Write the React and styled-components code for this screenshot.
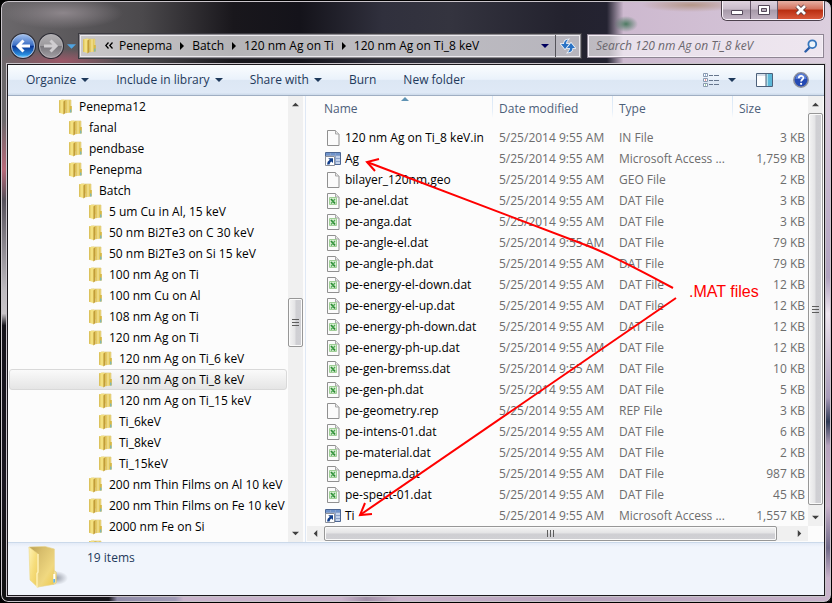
import React from "react";
import styled, { createGlobalStyle } from "styled-components";

const GlobalStyle = createGlobalStyle`
  * {
    box-sizing: border-box;
  }
  body {
    margin: 0;
    background: #000;
    font-family: "Open Sans", "Noto Sans", sans-serif;
    font-size: 12px;
    line-height: 16px;
    color: #000;
  }
  button {
    padding: 0;
    border: 0;
    background: none;
    font: inherit;
    color: inherit;
    white-space: nowrap;
  }
  svg {
    display: block;
    flex: none;
  }
`;

const Window = styled.div`
  display: flex;
  flex-direction: column;
  height: 100vh;
  overflow: hidden;
  border: 1px solid #000;
  border-radius: 8px;
  box-shadow: inset 0 0 0 1px #c9c4ca;
  background:
    linear-gradient(#d0777f00 20%, #b96a7a 28%, #55505a 33%, #bdbabf 48%, #c8c4c8 52%, #15131a 54%, #1a1720 80%, #111 100%)
      left / 7px 100% no-repeat,
    linear-gradient(#0000 10%, #d6c6da 20%, #b0a2bf 46%, #efe6ef 52%, #a79ab8 66%, #2f3a55 70%, #b6a3bd 74%, #c9b3cb 84%, #6f6988 91%, #c9b3cb 96%)
      right / 7px 100% no-repeat,
    linear-gradient(90deg, #15131a 13%, #8f8ba8 14%, #a09ab5 21%, #c9b3cb 22%, #c9b3cb 41%, #a08ea6 44%, #c9b3cb 48%, #b5a1bb 70%, #c9b3cb)
      bottom / 100% 7px no-repeat,
    radial-gradient(ellipse 62px 12px at 60px 60px, #9c5767 0%, #9c576700 100%),
    radial-gradient(ellipse 60px 16px at 62px 12px, #8d868b 0%, #8d868b00 100%),
    radial-gradient(ellipse 12px 8px at 625px 23px, #4d7a62 0%, #4d7a6200 100%),
    radial-gradient(ellipse 50px 7px at 690px 4px, #b59788 0%, #b5978800 100%),
    linear-gradient(90deg, #6b686b 0, #4b494c 17%, #19171c 28%, #14131a 36%, #30303d 46%, #34343f 54%, #23222e 68%, #242331 73%, #cdb9cf 75%, #d2c1d5 88%, #dccfde 100%);
`;

const TitleBar = styled.header`
  display: flex;
  flex-direction: column;
  justify-content: space-between;
  flex: none;
  height: 63px;
  padding: 0 7px 5px;
`;

const CaptionButtons = styled.div`
  display: flex;
  align-self: flex-end;
  height: 19px;
  border: 1px solid #fbf6fb;
  border-top: 0;
  border-radius: 0 0 5px 5px;
  box-shadow: 0 0 0 1px #4c414d;
  overflow: hidden;
`;

const CaptionButton = styled.button`
  display: flex;
  align-items: center;
  justify-content: center;
  width: ${(props) => (props.$close ? "46px" : "27px")};
  background: ${(props) =>
    props.$close
      ? "linear-gradient(#e6b0a4, #d2705b 45%, #b92d10 50%, #d8573a)"
      : "linear-gradient(#ded3df, #c7bac9 45%, #a79aa9 50%, #c0b2c2)"};

  & + & {
    border-left: 1px solid #66596a;
  }
`;

const NavRow = styled.div`
  display: flex;
  align-items: center;
  height: 26px;
`;

const NavButtons = styled.div`
  display: flex;
  align-items: center;
  gap: 4px;
  width: 71px;
  padding-left: 3px;
`;

const RoundButton = styled.button`
  display: flex;
  align-items: center;
  justify-content: center;
  width: 24px;
  height: 24px;
  border: 1px solid ${(props) => (props.$disabled ? "#b3b1b5" : "#a9c3e8")};
  border-radius: 50%;
  box-shadow: 0 0 0 1px #2a2a33;
  background: ${(props) =>
    props.$disabled
      ? "linear-gradient(#b0aeb1, #9c9a9d 48%, #79777c 52%, #a09da2)"
      : "linear-gradient(#9dbcec, #3c6fc4 46%, #0a3796 52%, #2b8fe0 90%, #6fd0ff)"};
`;

const AddressBar = styled.nav`
  display: flex;
  align-items: center;
  flex: 1;
  min-width: 0;
  height: 24px;
  border: 1px solid #8e8c92;
  box-shadow: inset 0 0 0 1px #eceaee, 0 0 0 1px #3b3a40;
  background: linear-gradient(90deg, #c9c7c9, #b5b4b7 30%, #bebdc2 60%, #b7b5bd);
  padding-left: 2px;
`;

const Crumbs = styled.ol`
  display: flex;
  align-items: center;
  flex: 1;
  min-width: 0;
  gap: 6px;
  margin: 0;
  padding: 0 0 0 7px;
  list-style: none;
  overflow: hidden;
`;

const Crumb = styled.li`
  display: flex;
  align-items: center;
  gap: 6px;
`;

const AddressButton = styled.button`
  display: flex;
  align-items: center;
  justify-content: center;
  width: ${(props) => (props.$divided ? "25px" : "21px")};
  height: 22px;
  border-left: ${(props) => (props.$divided ? "1px solid #55545a" : "0")};
`;

const SearchBox = styled.label`
  display: flex;
  align-items: center;
  width: 237px;
  height: 24px;
  margin-left: 6px;
  padding: 0 5px 0 8px;
  border: 1px solid #8e8593;
  box-shadow: inset 0 0 0 1px #f5eff6;
  background: linear-gradient(90deg, #bdbac0, #c0bcc3 9%, #e9e0eb 15%, #eee6ef);
`;

const SearchInput = styled.input`
  flex: 1;
  min-width: 0;
  padding: 0;
  border: 0;
  outline: 0;
  background: none;
  font: italic 12px/16px "Open Sans", "Noto Sans", sans-serif;

  &::placeholder {
    color: #6b676e;
    opacity: 1;
  }
`;

const Client = styled.main`
  display: flex;
  flex-direction: column;
  flex: 1;
  min-height: 0;
  margin: 0 6px 6px;
  border: 1px solid #1b181d;
  box-shadow: 0 0 0 1px #c9c4ca;
  background: #fcfcfc;
`;

const Toolbar = styled.div`
  display: flex;
  align-items: center;
  justify-content: space-between;
  flex: none;
  height: 31px;
  padding: 0 15px 0 18px;
  border-bottom: 1px solid #a0afc3;
  background: linear-gradient(#fafcfe, #eaf2fb 48%, #dce7f4 50%, #dfe9f6 92%, #cddaea);
  color: #1e395b;
`;

const Commands = styled.div`
  display: flex;
  align-items: center;
  gap: ${(props) => props.$gap}px;
`;

const Command = styled.button`
  display: flex;
  align-items: center;
  gap: 5px;
`;

const Body = styled.div`
  display: flex;
  flex: 1;
  min-height: 0;
`;

const TreePane = styled.aside`
  display: flex;
  flex: none;
  width: 298px;
  padding-right: 2px;
  border-right: 1px solid #dfe8f5;
`;

const Tree = styled.ul`
  flex: 1;
  min-width: 0;
  margin: 0;
  padding: 0;
  list-style: none;
  overflow: hidden;
`;

const TreeItem = styled.li`
  display: flex;
  height: 21px;
  padding: 0 1px;
`;

const TreeButton = styled.button`
  display: flex;
  align-items: center;
  gap: 5px;
  width: 100%;
  padding-left: ${(props) => 48 + props.$level * 10}px;
  border: 1px solid ${(props) => (props.$selected ? "#d9d9d9" : "transparent")};
  border-radius: 3px;
  background: ${(props) => (props.$selected ? "linear-gradient(#fafafa, #e5e5e5)" : "none")};
`;

const FilePane = styled.section`
  position: relative;
  display: grid;
  flex: 1;
  min-width: 0;
  grid-template-columns: 1fr 16px;
  grid-template-rows: 1fr 16px;
`;

const TableArea = styled.div`
  min-width: 0;
  min-height: 0;
  padding: 0 1px 0 11px;
  overflow: hidden;
`;

const FileTable = styled.table`
  width: 100%;
  table-layout: fixed;
  border-collapse: collapse;
`;

const Col = styled.col`
  width: ${(props) => props.$width};
`;

const HeaderCell = styled.th`
  position: relative;
  height: 31px;
  padding: 0 0 6px 7px;
  font-weight: 400;
  text-align: left;
  color: #4c607a;
  background: ${(props) =>
    props.$first ? "none" : "linear-gradient(#d9e7f6, #e6eff9 70%, #fcfcfc) left top / 1px 22px no-repeat"};
`;

const SortMark = styled.svg`
  position: absolute;
  top: 1px;
  left: 48%;
`;

const Cell = styled.td`
  height: 21px;
  padding: 0 2px 0 7px;
  color: #6d6d6d;
  white-space: nowrap;
  text-align: ${(props) => (props.$right ? "right" : "left")};
`;

const FileName = styled.div`
  display: flex;
  align-items: center;
  gap: 4px;
  padding-left: 1px;
  color: #000;
`;

const ScrollTrack = styled.div`
  display: flex;
  flex: none;
  flex-direction: ${(props) => (props.$horizontal ? "row" : "column")};
  width: ${(props) => (props.$horizontal ? "auto" : "15px")};
  height: ${(props) => (props.$horizontal ? "15px" : "auto")};
  margin-left: ${(props) => (props.$horizontal ? "1px" : "0")};
  background: #f0f0f0;
`;

const ScrollArrow = styled.button`
  display: flex;
  align-items: center;
  justify-content: center;
  flex: none;
  width: 17px;
  height: 17px;
  max-width: 100%;
  max-height: 100%;
`;

const ScrollSpace = styled.div`
  flex: ${(props) => props.$grow} 1 0;
`;

const ScrollThumb = styled.div`
  display: flex;
  align-items: center;
  justify-content: center;
  flex: ${(props) => props.$grow} 1 0;
  border: 1px solid #979797;
  border-radius: 2px;
  box-shadow: inset 0 0 0 1px #fafafa;
  background: linear-gradient(
    ${(props) => (props.$horizontal ? "180deg" : "90deg")},
    #f4f4f4,
    #e3e3e5 48%,
    #cfcfd3 52%,
    #d0d0d4
  );
`;

const Annotation = styled.svg`
  position: absolute;
  top: 0;
  left: 0;
  pointer-events: none;
`;

const AnnotationText = styled.span`
  position: absolute;
  top: 186px;
  left: 383px;
  font: 16px/20px "Liberation Sans", Arial, sans-serif;
  color: #f00;
  pointer-events: none;
`;

const Details = styled.footer`
  display: flex;
  flex: none;
  gap: 11px;
  height: 53px;
  padding: 2px 0 0 20px;
  border-top: 1px solid #cbd9ea;
  background: linear-gradient(#e3ebf7, #f1f5fc 4px);
  color: #1e395b;
`;

const ItemCount = styled.p`
  margin: 5px 0 0;
`;

const tree = [
  [0, "Penepma12"],
  [1, "fanal"],
  [1, "pendbase"],
  [1, "Penepma"],
  [2, "Batch"],
  [3, "5 um Cu in Al, 15 keV"],
  [3, "50 nm Bi2Te3 on C 30 keV"],
  [3, "50 nm Bi2Te3 on Si 15 keV"],
  [3, "100 nm Ag on Ti"],
  [3, "100 nm Cu on Al"],
  [3, "108 nm Ag on Ti"],
  [3, "120 nm Ag on Ti"],
  [4, "120 nm Ag on Ti_6 keV"],
  [4, "120 nm Ag on Ti_8 keV"],
  [4, "120 nm Ag on Ti_15 keV"],
  [4, "Ti_6keV"],
  [4, "Ti_8keV"],
  [4, "Ti_15keV"],
  [3, "200 nm Thin Films on Al 10 keV"],
  [3, "200 nm Thin Films on Fe 10 keV"],
  [3, "2000 nm Fe on Si"],
  [3, ""],
];

const files = [
  ["120 nm Ag on Ti_8 keV.in", "IN File", "3 KB", "blank"],
  ["Ag", "Microsoft Access ...", "1,759 KB", "access"],
  ["bilayer_120nm.geo", "GEO File", "2 KB", "blank"],
  ["pe-anel.dat", "DAT File", "3 KB", "excel"],
  ["pe-anga.dat", "DAT File", "3 KB", "excel"],
  ["pe-angle-el.dat", "DAT File", "79 KB", "excel"],
  ["pe-angle-ph.dat", "DAT File", "79 KB", "excel"],
  ["pe-energy-el-down.dat", "DAT File", "12 KB", "excel"],
  ["pe-energy-el-up.dat", "DAT File", "12 KB", "excel"],
  ["pe-energy-ph-down.dat", "DAT File", "12 KB", "excel"],
  ["pe-energy-ph-up.dat", "DAT File", "12 KB", "excel"],
  ["pe-gen-bremss.dat", "DAT File", "10 KB", "excel"],
  ["pe-gen-ph.dat", "DAT File", "5 KB", "excel"],
  ["pe-geometry.rep", "REP File", "3 KB", "blank"],
  ["pe-intens-01.dat", "DAT File", "6 KB", "excel"],
  ["pe-material.dat", "DAT File", "2 KB", "excel"],
  ["penepma.dat", "DAT File", "987 KB", "excel"],
  ["pe-spect-01.dat", "DAT File", "45 KB", "excel"],
  ["Ti", "Microsoft Access ...", "1,557 KB", "access"],
];

const crumbs = ["Penepma", "Batch", "120 nm Ag on Ti", "120 nm Ag on Ti_8 keV"];

const FolderIcon = () => (
  <svg width="16" height="16" viewBox="0 0 16 16">
    <path d="M3 1h10v9H3z" fill="#f3e296" stroke="#d9c272" strokeWidth="0.6" />
    <path d="M1 1.2 6 .4v14.8L1 13.8z" fill="#f3e080" />
    <path d="M1 1.2h1.4v12.9L1 13.8z" fill="#dcc25c" />
    <path d="M5.400 2.4 7.6 1v13L5.400 15.6z" fill="#c29d38" />
    <path d="M7.6 1.2h4.9v12.4l-4.9.7z" fill="#e3c962" />
    <path d="M9.4 1.2h1.2v12.6l-1.2.2z" fill="#f3e59c" />
    <path d="M11.8 7h2v6.6h-2z" fill="#d6b845" />
    <path d="M12.3 10.5h1v3h-1z" fill="#57b7e6" />
  </svg>
);

const BigFolderIcon = () => (
  <svg width="48" height="46" viewBox="0 0 48 46">
    <defs>
      <linearGradient id="flap" x1="0" y1="0" x2="1" y2="1">
        <stop offset="0" stopColor="#fff3b4" />
        <stop offset="0.5" stopColor="#f6dd7c" />
        <stop offset="1" stopColor="#eccb5c" />
      </linearGradient>
      <linearGradient id="inner" x1="0" y1="0" x2="1" y2="1">
        <stop offset="0" stopColor="#b89e50" />
        <stop offset="0.3" stopColor="#d8be6c" />
        <stop offset="0.7" stopColor="#f0d880" />
        <stop offset="1" stopColor="#edc94c" />
      </linearGradient>
      <radialGradient id="shade">
        <stop offset="0" stopColor="#6f7480" stopOpacity="0.7" />
        <stop offset="1" stopColor="#6f7480" stopOpacity="0" />
      </radialGradient>
    </defs>
    <ellipse cx="28" cy="33" rx="12" ry="7" fill="url(#shade)" />
    <path d="M1 2 17 1.4 26.4 4v23l-1 12.4L10 42z" fill="url(#inner)" stroke="#e7d38d" strokeWidth="0.6" />
    <path d="m1 2 9 7v33.6L2 35z" fill="url(#flap)" stroke="#ecd88a" strokeWidth="0.6" />
    <path d="M10 9v18l-1 1.5v14" fill="none" stroke="#fff2ba" strokeWidth="1.4" />
    <path d="M25.4 26c2 0 3 .5 3 2v9.6c0 1-2 1.7-3 1.8z" fill="#f5e297" stroke="#dcc36c" strokeWidth="0.5" />
    <path d="M26.2 29v8" stroke="#fff" strokeWidth="1.8" />
    <path d="M26.2 34v3.4" stroke="#5eb4ea" strokeWidth="1.8" />
  </svg>
);

const FileIcon = ({ kind }) => {
  if (kind === "access") {
    return (
      <svg width="16" height="16" viewBox="0 0 16 16">
        <path d="M.5 1.5h15v12H.5z" fill="#fff" stroke="#4c6693" />
        <path d="M1 2h14v2H1z" fill="#6f93ca" />
        <path d="M11 4h4v9h-4z" fill="#c5d3ea" />
        <path d="M1 4.500h14M1 7.500h14M1 10.500h14M5.500 2v11M10.500 2v11" stroke="#8ba3cc" fill="none" />
        <path d="M.5 5.500h9v9h-9z" fill="#fff" stroke="#8a8f99" />
        <path d="M3.200 7.200H8v4.800L6.400 10.400Q4.600 11.400 4.600 13.400L2 13.400Q2 10.400 4.800 8.800z" fill="#123f8c" />
      </svg>
    );
  }
  return (
    <svg width="16" height="16" viewBox="0 0 16 16">
      <path d="M2.500.5h8l3.500 3.500v11.500H2.500z" fill="#fbfbfb" stroke="#909090" />
      <path d="M10.500.5v3.500H14" fill="#e8e8e8" stroke="#a8a8a8" />
      {kind === "excel" && (
        <g>
          <path d="M4.500 4.500h7v7h-7z" fill="#d9eed3" stroke="#9fce96" />
          <path d="m6 6 4 4.500" stroke="#2b8a34" strokeWidth="1.800" />
          <path d="M10 6 6 10.500" stroke="#4ea854" strokeWidth="1.200" />
        </g>
      )}
    </svg>
  );
};

const arrowPaths = {
  down: "M0 2h8L4 6z",
  up: "M0 6h8L4 2z",
  left: "M6 0v8L2 4z",
  right: "M2 0v8l4-4z",
};

const Triangle = ({ dir = "down", color = "#1e395b", size = 8 }) => (
  <svg width={size} height={size} viewBox="0 0 8 8">
    <path d={arrowPaths[dir]} fill={color} />
  </svg>
);

const Grip = ({ horizontal }) => (
  <svg width="8" height="8" viewBox="0 0 8 8">
    <path
      d={horizontal ? "M1.500 0v7M4.500 0v7M7.500 0v7" : "M0 1.500h7M0 4.500h7M0 7.500h7"}
      stroke="#5d5d5d"
    />
  </svg>
);

const Scrollbar = ({ horizontal, before, thumb, after }) => (
  <ScrollTrack $horizontal={horizontal}>
    <ScrollArrow aria-label={horizontal ? "Scroll left" : "Scroll up"}>
      <Triangle dir={horizontal ? "left" : "up"} color="#404040" size={7} />
    </ScrollArrow>
    <ScrollSpace $grow={before} />
    <ScrollThumb $horizontal={horizontal} $grow={thumb}>
      <Grip horizontal={horizontal} />
    </ScrollThumb>
    <ScrollSpace $grow={after} />
    <ScrollArrow aria-label={horizontal ? "Scroll right" : "Scroll down"}>
      <Triangle dir={horizontal ? "right" : "down"} color="#404040" size={7} />
    </ScrollArrow>
  </ScrollTrack>
);

const Title = () => (
  <TitleBar>
    <CaptionButtons>
      <CaptionButton aria-label="Minimize">
        <svg width="14" height="12" viewBox="0 0 14 12">
          <path d="M1.500 6.500h11v4h-11z" fill="#fff" stroke="#54495a" />
        </svg>
      </CaptionButton>
      <CaptionButton aria-label="Maximize">
        <svg width="13" height="12" viewBox="0 0 13 12">
          <path d="M.5 1.500h11v9H.5z" fill="#fff" stroke="#54495a" />
          <path d="M3.500 4.500h5v3h-5z" fill="#b9adbb" stroke="#54495a" />
        </svg>
      </CaptionButton>
      <CaptionButton $close aria-label="Close">
        <svg width="14" height="12" viewBox="0 0 14 12">
          <path d="m3 2 8 8M11 2l-8 8" stroke="#5b3b40" strokeWidth="4.500" />
          <path d="m3 2 8 8M11 2l-8 8" stroke="#fff" strokeWidth="2.700" />
        </svg>
      </CaptionButton>
    </CaptionButtons>
    <NavRow>
      <NavButtons>
        <RoundButton aria-label="Back">
          <svg width="16" height="16" viewBox="0 0 16 16">
            <path d="M15 8H3M8.500 2.500 3 8l5.500 5.500" fill="none" stroke="#fff" strokeWidth="3" />
          </svg>
        </RoundButton>
        <RoundButton $disabled aria-label="Forward">
          <svg width="16" height="16" viewBox="0 0 16 16">
            <path d="M1 8h12M7.500 2.500 13 8l-5.500 5.500" fill="none" stroke="#cfcdd0" strokeWidth="3" />
          </svg>
        </RoundButton>
        <button aria-label="Recent pages">
          <Triangle color="#4fa3e0" size={9} />
        </button>
      </NavButtons>
      <AddressBar aria-label="Address">
        <FolderIcon />
        <Crumbs>
          <li>
            <svg width="8" height="8" viewBox="0 0 8 8">
              <path d="M3.500.5.8 3.500l2.700 3M7.500.5l-2.700 3 2.700 3" fill="none" stroke="#000" strokeWidth="1.300" />
            </svg>
          </li>
          {crumbs.map((name, i) => (
            <Crumb key={name}>
              {i > 0 && <Triangle dir="right" color="#000" />}
              <button>{name}</button>
            </Crumb>
          ))}
        </Crumbs>
        <AddressButton aria-label="Previous locations">
          <Triangle color="#00005e" />
        </AddressButton>
        <AddressButton $divided aria-label="Refresh">
          <svg width="16" height="16" viewBox="0 0 16 16">
            <path
              d="M8 1.500Q4 2 4 6H1l4 5 4-5H6.200Q6 3.500 8 1.500zM8 14.500Q12.500 14 12.500 10H15l-4-5-4 5h3Q10 12.500 8 14.500z"
              fill="#2a72c4"
              stroke="#eef4fb"
              strokeWidth="1.600"
              paintOrder="stroke"
            />
          </svg>
        </AddressButton>
      </AddressBar>
      <SearchBox>
        <SearchInput type="search" aria-label="Search" placeholder="Search 120 nm Ag on Ti_8 keV" />
        <svg width="14" height="14" viewBox="0 0 14 14">
          <path d="M5.500 8.500 1.500 12.500" stroke="#2a5da8" strokeWidth="2.400" strokeLinecap="round" />
          <circle cx="8.300" cy="5.200" r="3.900" fill="#edf4fb" stroke="#3676bd" strokeWidth="1.800" />
        </svg>
      </SearchBox>
    </NavRow>
  </TitleBar>
);

const CommandBar = () => (
  <Toolbar>
    <Commands $gap={27}>
      <Command>
        Organize <Triangle />
      </Command>
      <Command>
        Include in library <Triangle />
      </Command>
      <Command>
        Share with <Triangle />
      </Command>
      <Command>Burn</Command>
      <Command>New folder</Command>
    </Commands>
    <Commands $gap={20}>
      <Command aria-label="Change view">
        <svg width="16" height="14" viewBox="0 0 16 14">
          <path d="M.5.500h4v3h-4zM.5 5.500h4v3h-4zM.5 10.500h4v3h-4z" fill="#fff" stroke="#8a9ab0" />
          <path d="M2 1.500h1v1H2z" fill="#3b72b8" />
          <path d="M2 6.500h1v1H2z" fill="#d0353a" />
          <path d="M2 11.500h1v1H2z" fill="#3a9950" />
          <path d="M6 2.500h4M11 2.500h5M6 7.500h4M11 7.500h5M6 11.500h4M11 11.500h5" stroke="#66768d" />
        </svg>
        <Commands $gap={0} as="span">
          <svg width="4" height="8" />
          <Triangle />
        </Commands>
      </Command>
      <Command aria-label="Preview pane">
        <svg width="17" height="14" viewBox="0 0 17 14">
          <path d="M.5.500h16v13H.5z" fill="#fdfeff" stroke="#4c607a" />
          <path d="M1 1h9v2H1z" fill="#d5dee9" />
          <path d="M10 1h6v12h-6z" fill="#5cb8d8" />
          <path d="M10 1h2v12h-2z" fill="#aee0ee" />
          <path d="M10 .5v13" stroke="#4c607a" />
        </svg>
      </Command>
      <Command aria-label="Help">
        <svg width="16" height="16" viewBox="0 0 16 16">
          <circle cx="8" cy="8" r="7.200" fill="#2349b4" stroke="#8b8f9b" strokeWidth="1.500" />
          <path d="M2.500 7a5.500 5.500 0 0 1 11 0z" fill="#5a7fd8" />
          <path d="M5.800 6.200c0-3 4.600-3 4.600-.4C10.400 7.500 8.100 7.500 8.100 9.500" fill="none" stroke="#fff" strokeWidth="1.700" />
          <circle cx="8.100" cy="11.800" r="1.100" fill="#fff" />
        </svg>
      </Command>
    </Commands>
  </Toolbar>
);

const FileList = () => (
  <FileTable>
    <colgroup>
      <Col $width="175px" />
      <Col $width="120px" />
      <Col $width="120px" />
      <Col $width="auto" />
    </colgroup>
    <thead>
      <tr>
        <HeaderCell $first aria-sort="ascending">
          Name
          <SortMark width="8" height="4" viewBox="0 0 8 4">
            <path d="M0 4h8L4 0z" fill="#5f93b4" />
          </SortMark>
        </HeaderCell>
        <HeaderCell>Date modified</HeaderCell>
        <HeaderCell>Type</HeaderCell>
        <HeaderCell>Size</HeaderCell>
      </tr>
    </thead>
    <tbody>
      {files.map(([name, type, size, kind]) => (
        <tr key={name}>
          <Cell>
            <FileName>
              <FileIcon kind={kind} />
              {name}
            </FileName>
          </Cell>
          <Cell>5/25/2014 9:55 AM</Cell>
          <Cell>{type}</Cell>
          <Cell $right>{size}</Cell>
        </tr>
      ))}
    </tbody>
  </FileTable>
);

const App = () => {
  return (
    <>
      <GlobalStyle />
      <Window>
        <Title />
        <Client>
          <CommandBar />
          <Body>
            <TreePane>
              <Tree>
                {tree.map(([level, name], i) => (
                  <TreeItem key={i}>
                    <TreeButton $level={level} $selected={i === 13}>
                      <FolderIcon />
                      {name}
                    </TreeButton>
                  </TreeItem>
                ))}
              </Tree>
              <Scrollbar before={186} thumb={47} after={179} />
            </TreePane>
            <FilePane>
              <TableArea>
                <FileList />
              </TableArea>
              <Scrollbar before={0} thumb={390} after={4} />
              <Scrollbar horizontal before={0} thumb={450} after={14} />
              {/* callout arrows drawn over the list */}
              <Annotation width="400" height="430" viewBox="0 0 400 430">
                <g fill="none" stroke="#f00" strokeWidth="2">
                  <path d="M367 192Q300 156 277 148L61 66" />
                  <path d="M73 63 61 66l8 9" />
                  <path d="M370 202 54 419" />
                  <path d="M59 407l-5 12 12-1" />
                </g>
              </Annotation>
              <AnnotationText>.MAT files</AnnotationText>
            </FilePane>
          </Body>
          <Details>
            <BigFolderIcon />
            <ItemCount>19 items</ItemCount>
          </Details>
        </Client>
      </Window>
    </>
  );
};

export default App;
